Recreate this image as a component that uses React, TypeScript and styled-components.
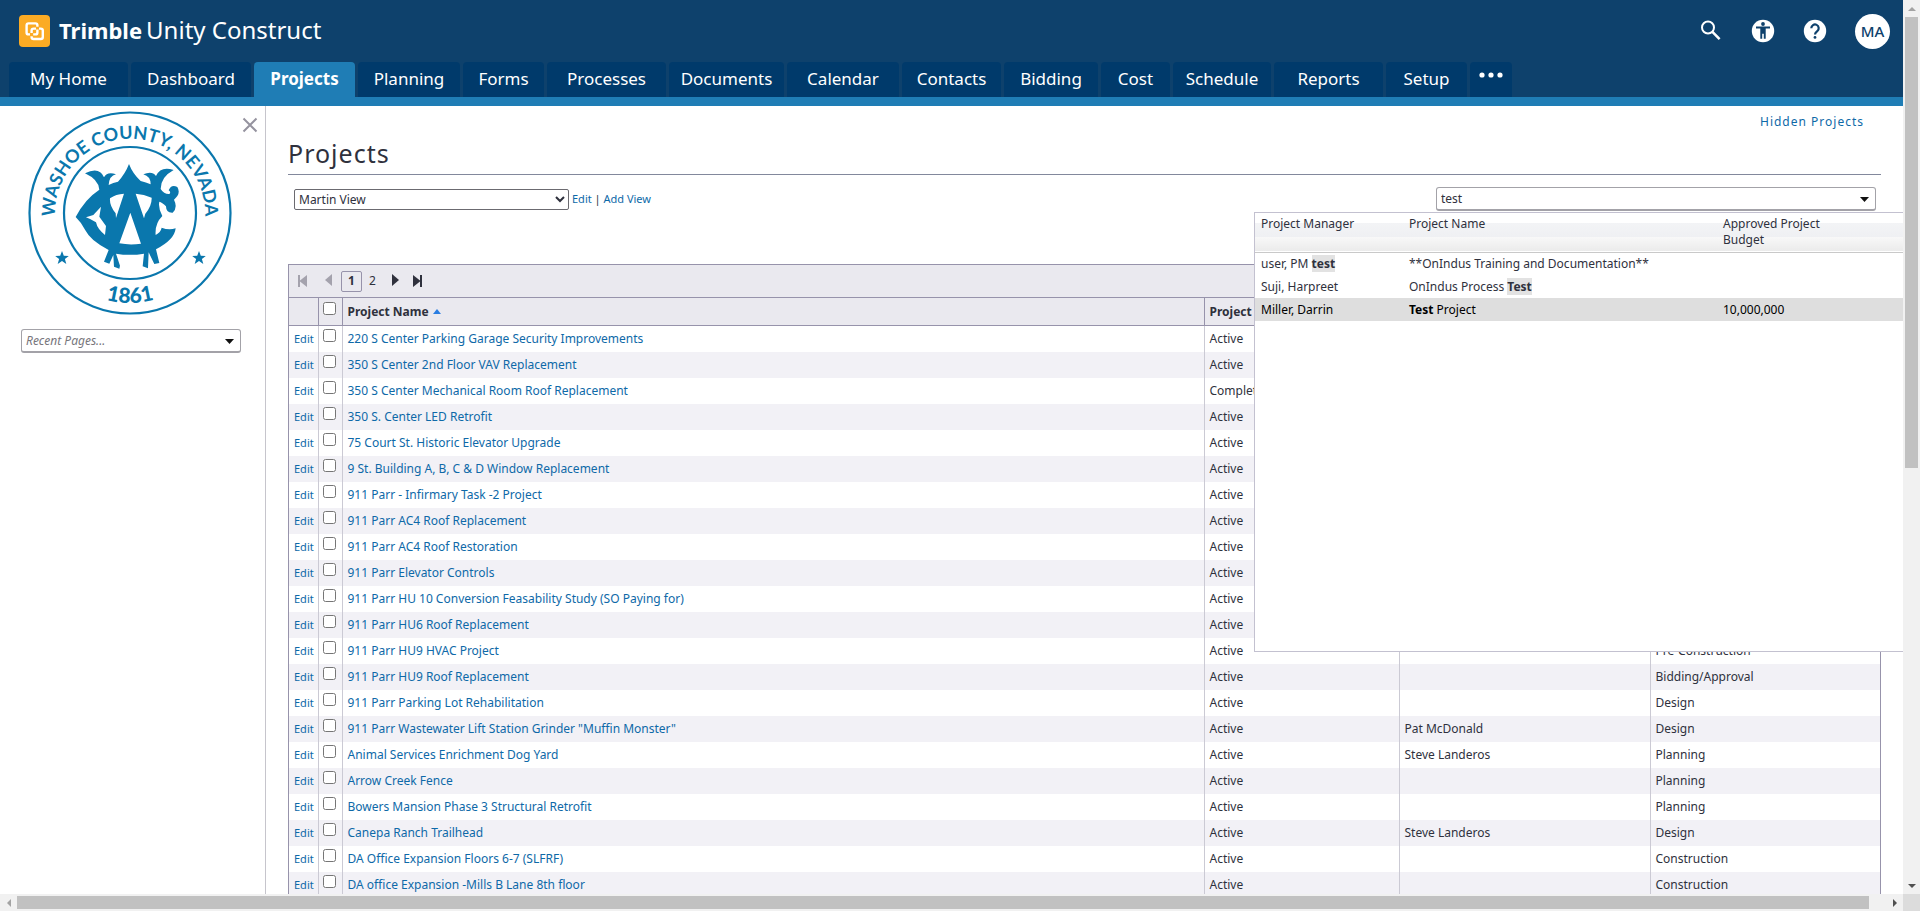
import React from "react";
import styled, { createGlobalStyle } from "styled-components";

const color = {
  header: "#0e416c",
  tab: "#003a6b",
  accent: "#1f7db5",
  link: "#0e69a8",
  ink: "#2f313d",
  gridLine: "#9793ab",
  cellLine: "#cbcad4",
  gridHead: "#eae9ef",
  stripe: "#f2f1f6",
};

const GlobalStyle = createGlobalStyle`
  *, *::before, *::after { box-sizing: border-box; }
  body {
    margin: 0;
    background: #fff;
    color: ${color.ink};
    font: 12px/16px "Noto Sans", "Open Sans", sans-serif;
  }
  a { color: ${color.link}; text-decoration: none; }
  button, input, select { font: inherit; color: inherit; }
  button { background: none; border: 0; padding: 0; cursor: pointer; }
  svg { display: block; }
`;

const Frame = styled.div`
  display: grid;
  grid-template: minmax(0, 1fr) 17px / minmax(0, 1fr) 17px;
  height: 100vh;
`;

const Page = styled.div`
  display: flex;
  flex-direction: column;
  overflow: hidden;
`;

/* Header */

const Header = styled.header`
  flex: none;
  background: ${color.header};
  border-bottom: 9px solid ${color.accent};
`;

const Brand = styled.div`
  display: flex;
  align-items: center;
  height: 62px;
  padding: 0 13px 0 19px;
  color: #fff;
`;

const BrandName = styled.div`
  display: flex;
  align-items: baseline;
  gap: 4px;
  margin-left: 9px;
  padding-bottom: 2px;
  font-size: 24px;
  line-height: 32px;
`;

const BrandBold = styled.strong`
  font-size: 22px;
`;

const Tools = styled.div`
  display: flex;
  align-items: center;
  gap: 28px;
  margin-left: auto;
`;

const ToolButton = styled.button`
  width: 24px;
  height: 24px;
  color: #fff;
`;

const Avatar = styled.button`
  width: 35px;
  height: 35px;
  border-radius: 50%;
  background: #fff;
  color: ${color.header};
  font-size: 15px;
  font-weight: 500;
`;

const Tabs = styled.nav`
  display: flex;
  gap: 3px;
  height: 35px;
  padding-left: 9px;
`;

const Tab = styled.a<{ $width: number; $active?: boolean }>`
  display: flex;
  justify-content: center;
  align-items: center;
  width: ${(p) => p.$width}px;
  padding-bottom: 1px;
  border-radius: 4px 4px 0 0;
  background: ${(p) => (p.$active ? color.accent : color.tab)};
  color: #fff;
  font-size: 17px;
  font-weight: ${(p) => (p.$active ? 700 : 400)};
`;

const MoreTab = styled.button`
  width: 42px;
  height: 35px;
  padding-bottom: 10px;
  border-radius: 4px 4px 0 0;
  background: ${color.tab};
  color: #fff;
  svg { margin: 0 auto; }
`;

/* Body */

const Body = styled.div`
  display: flex;
  flex: 1;
  min-height: 0;
`;

const Sidebar = styled.aside`
  position: relative;
  flex: none;
  width: 266px;
  padding: 5px 24px 0 21px;
  border-right: 1px solid #c6c5cc;
`;

const SealBox = styled.div`
  display: flex;
  margin: 0 0 14px 7px;
`;

const CloseButton = styled.button`
  position: absolute;
  top: 11px;
  right: 7px;
`;

const Combo = styled.div<{ $italic?: boolean }>`
  display: flex;
  align-items: center;
  height: 24px;
  padding-top: 1px;
  border: 1px solid #a3a2a8;
  border-bottom-width: 2px;
  border-radius: 3px;
  background: #fff;
  input {
    flex: 1;
    min-width: 0;
    padding: 0 4px;
    border: 0;
    outline: 0;
    background: none;
    font-style: ${(p) => (p.$italic ? "italic" : "normal")};
  }
  input::placeholder { color: #77767c; opacity: 1; }
  button { padding: 0 6px; color: #111; }
`;

const Main = styled.main`
  position: relative;
  flex: 1;
  min-width: 0;
  padding: 8px 22px 0;
`;

const TopLinks = styled.div`
  display: flex;
  justify-content: flex-end;
  padding-right: 17px;
  letter-spacing: 1px;
`;

const Title = styled.h1`
  margin: 5px 0 0;
  border-bottom: 1px solid #82889c;
  font-size: 25px;
  font-weight: 400;
  line-height: 36px;
  height: 40px;
  letter-spacing: 1px;
`;

const Toolbar = styled.div`
  display: flex;
  justify-content: space-between;
  padding: 12px 5px 0 6px;
  height: 89px;
`;

const ViewPicker = styled.div`
  display: flex;
  align-items: center;
  gap: 3px;
  height: 24px;
  font-size: 11px;
  select {
    width: 275px;
    height: 21px;
    padding: 0;
    border: 1px solid #6b6a70;
    border-radius: 2px;
    background: #fff;
    font-size: 12px;
  }
`;

const SearchBox = styled.div`
  width: 440px;
`;

/* Project grid */

const GridBox = styled.section`
  border: 1px solid ${color.gridLine};
  border-width: 1px 1px 0;
`;

const Pager = styled.div`
  display: flex;
  align-items: center;
  height: 32px;
  padding-left: 8px;
  background: ${color.gridHead};
`;

const PageStep = styled.button<{ $width: number; $dim?: boolean }>`
  width: ${(p) => p.$width}px;
  color: ${(p) => (p.$dim ? "#a4a2ad" : color.ink)};
`;

const PageNumber = styled.button<{ $current?: boolean }>`
  width: 21px;
  height: 21px;
  border: 1px solid ${(p) => (p.$current ? color.gridLine : "transparent")};
  border-radius: 2px;
  font-weight: ${(p) => (p.$current ? 700 : 400)};
  line-height: 18px;
`;

const NumberGroup = styled.div`
  display: flex;
  margin-right: 7px;
`;

const Table = styled.table`
  width: 100%;
  table-layout: fixed;
  border-collapse: collapse;
  th, td {
    height: 26px;
    padding: 0 0 0 5px;
    border-left: 1px solid ${color.cellLine};
    text-align: left;
    white-space: nowrap;
    overflow: hidden;
  }
  th {
    height: 28px;
    background: ${color.gridHead};
    border: 1px solid ${color.gridLine};
    border-width: 1px 0 1px 1px;
  }
  th:first-child, td:first-child { border-left: 0; font-size: 11px; }
  th:nth-child(2), td:nth-child(2) { padding-left: 4px; }
  tbody tr:nth-child(even) { background: ${color.stripe}; }
  input { display: block; width: 13px; height: 13px; margin: 0 0 6px; }
`;

const SortLabel = styled.span`
  display: flex;
  align-items: center;
  gap: 4px;
`;

/* Search results */

const Results = styled.div`
  position: absolute;
  top: 106px;
  right: 0;
  width: 649px;
  height: 440px;
  background: #fff;
  border: 1px solid #c3c1d0;
  border-right: 0;
`;

const ResultsTable = styled.table`
  width: 100%;
  table-layout: fixed;
  border-collapse: collapse;
  thead {
    height: 39px;
    background: linear-gradient(#fff 0 25%, #f3f4f6 26%, #eff0f3 62%, #f8f8f8 63%, #ebebeb);
    border-bottom: 1px solid #c9c9c9;
  }
  th {
    padding: 3px 6px;
    font-weight: 400;
    text-align: left;
    vertical-align: top;
  }
  th:last-child { padding-right: 60px; }
  td { height: 23px; padding: 0 6px; }
`;

const ResultRow = styled.tr<{ $selected?: boolean }>`
  background: ${(p) => (p.$selected ? "#dedede" : "transparent")};
  color: ${(p) => (p.$selected ? "#000" : "inherit")};
  mark {
    background: ${(p) => (p.$selected ? "transparent" : "#e2e2e2")};
    color: inherit;
    font-weight: 700;
  }
`;

/* Scroll bars */

const Track = styled.div<{ $vertical?: boolean }>`
  display: flex;
  flex-direction: ${(p) => (p.$vertical ? "column" : "row")};
  align-items: center;
  background: #f1f1f1;
`;

const Arrow = styled.div<{ $dim?: boolean }>`
  display: flex;
  justify-content: center;
  align-items: center;
  flex: none;
  width: 17px;
  height: 17px;
  color: ${(p) => (p.$dim ? "#a3a3a3" : "#505050")};
`;

const VerticalThumb = styled.div`
  width: 13px;
  height: 50.5%;
  background: #c1c1c1;
`;

const HorizontalThumb = styled.div`
  width: 97.3%;
  height: 13px;
  background: #c1c1c1;
`;

const Spacer = styled.div`
  flex: 1;
`;

const Corner = styled.div`
  background: #dcdcdc;
`;

const Caret = () => (
  <svg width="9" height="5" viewBox="0 0 9 5" fill="currentColor">
    <path d="M0 0h9L4.500 5z" />
  </svg>
);

const TrimbleMark = () => (
  <svg width="31" height="32" viewBox="0 0 31 32" fill="none">
    <rect width="31" height="32" rx="4" fill="#fbab24" />
    <g stroke="#fff" strokeWidth="2.4">
      <path d="M11 19.400h-1.400a2 2 0 0 1-2-2v-7a2 2 0 0 1 2-2h6.800a2 2 0 0 1 2 2v1.400" />
      <path d="M18.400 14.500v2.900a2 2 0 0 1-2 2H14.200" />
      <path d="M20 13.600h1.800a2 2 0 0 1 2 2v6.400a2 2 0 0 1-2 2h-7.200a2 2 0 0 1-2-2v-.800" />
      <path d="M12.600 18v-2.400a2 2 0 0 1 2-2H17" />
    </g>
  </svg>
);

const SearchIcon = () => (
  <svg width="24" height="24" viewBox="0 0 24 24" fill="none" stroke="#fff">
    <circle cx="9" cy="8.500" r="6" strokeWidth="2" />
    <path d="M13.200 12.700l7.400 7.400" strokeWidth="2.600" />
  </svg>
);

const AccessIcon = () => (
  <svg width="24" height="24" viewBox="0 0 24 24">
    <circle cx="12" cy="12" r="11.200" fill="#fff" />
    <g fill={color.header}>
      <circle cx="12" cy="5" r="1.900" />
      <path d="M5 7.600h14v2h-4.300v10.200h-1.900v-5h-1.600v5H9.300V9.600H5z" />
    </g>
  </svg>
);

const HelpIcon = () => (
  <svg width="24" height="24" viewBox="0 0 24 24">
    <circle cx="12" cy="12" r="11.200" fill="#fff" />
    <path d="M8.300 9.200a3.700 3.700 0 1 1 6 2.900c-1.300 1-2.300 1.600-2.300 3.400" fill="none" stroke={color.header} strokeWidth="2.200" />
    <circle cx="12" cy="18.400" r="1.400" fill={color.header} />
  </svg>
);

const Star = ({ x, y }: { x: number; y: number }) => (
  <path
    transform={`translate(${x} ${y})`}
    d="M0-7l1.800 4.700 5 .2-3.900 3.100 1.400 4.900L0 3.100l-4.300 2.800 1.400-4.900-3.900-3.100 5-.2z"
  />
);

const CountySeal = () => (
  <svg width="204" height="204" viewBox="0 0 204 204" fill="#0a77ad" role="img" aria-label="Washoe County, Nevada, 1861">
    <defs>
      <path id="seal-top" d="M28 115a75 75 0 1 1 148 0" />
      <path id="seal-bottom" d="M12 102a90 90 0 0 0 180 0" />
    </defs>
    <circle cx="102" cy="102" r="100.500" fill="none" stroke="#0a77ad" strokeWidth="2.200" />
    <circle cx="102" cy="102" r="66" fill="none" stroke="#0a77ad" strokeWidth="2.200" />
    <g fontFamily="Lato, sans-serif" textAnchor="middle">
      <text fontSize="18" fontWeight="700">
        <textPath href="#seal-top" startOffset="50%">WASHOE COUNTY, NEVADA</textPath>
      </text>
      <text fontSize="21" fontWeight="900">
        <textPath href="#seal-bottom" startOffset="50%">1861</textPath>
      </text>
    </g>
    <Star x={34} y={147} />
    <Star x={171} y={147} />
    <g transform="translate(32 34) scale(.3333)">
      <path
        fillRule="evenodd"
        d="M47 216Q75 162 118 134Q116 104 75 85Q118 64 132 97Q142 78 168 88Q148 92 146 120Q160 112 174 110Q196 86 207 57Q218 86 242 108Q258 112 272 118Q272 94 250 88Q276 76 288 93Q302 62 341 75Q302 96 302 132Q312 148 328 147Q334 142 326 136Q334 116 352 126Q364 146 342 164Q354 188 338 203Q318 204 318 184Q306 172 298 170Q294 190 307 213Q284 236 287 270Q302 262 305 248Q326 256 347 250Q344 284 288 313L298 354L283 357L266 322L264 370L248 364L252 326Q210 333 168 326L180 362L178 371L162 365L160 330L148 356L132 350L146 315Q92 288 76 256Q64 232 47 216ZM78 217L100 210L123 185L118 215L138 243L135 270Q112 252 108 232Q92 222 78 217ZM150 160Q168 147 192 146L168 219L167 205Q148 182 150 160ZM211 203L178 295Q210 301 243 296ZM227 146Q252 148 275 158Q276 182 256 206L252 220Z"
      />
    </g>
  </svg>
);

const tabs: [string, number][] = [
  ["My Home", 119], ["Dashboard", 120], ["Projects", 101], ["Planning", 102], ["Forms", 81],
  ["Processes", 119], ["Documents", 115], ["Calendar", 112], ["Contacts", 99], ["Bidding", 94],
  ["Cost", 69], ["Schedule", 98], ["Reports", 109], ["Setup", 81],
];

type Project = { name: string; status?: string; manager?: string; phase?: string };

const projects: Project[] = [
  { name: "220 S Center Parking Garage Security Improvements" },
  { name: "350 S Center 2nd Floor VAV Replacement" },
  { name: "350 S Center Mechanical Room Roof Replacement", status: "Complete" },
  { name: "350 S. Center LED Retrofit" },
  { name: "75 Court St. Historic Elevator Upgrade" },
  { name: "9 St. Building A, B, C & D Window Replacement" },
  { name: "911 Parr - Infirmary Task -2 Project" },
  { name: "911 Parr AC4 Roof Replacement" },
  { name: "911 Parr AC4 Roof Restoration" },
  { name: "911 Parr Elevator Controls" },
  { name: "911 Parr HU 10 Conversion Feasability Study (SO Paying for)" },
  { name: "911 Parr HU6 Roof Replacement" },
  { name: "911 Parr HU9 HVAC Project", phase: "Pre-Construction" },
  { name: "911 Parr HU9 Roof Replacement", phase: "Bidding/Approval" },
  { name: "911 Parr Parking Lot Rehabilitation", phase: "Design" },
  { name: '911 Parr Wastewater Lift Station Grinder "Muffin Monster"', manager: "Pat McDonald", phase: "Design" },
  { name: "Animal Services Enrichment Dog Yard", manager: "Steve Landeros", phase: "Planning" },
  { name: "Arrow Creek Fence", phase: "Planning" },
  { name: "Bowers Mansion Phase 3 Structural Retrofit", phase: "Planning" },
  { name: "Canepa Ranch Trailhead", manager: "Steve Landeros", phase: "Design" },
  { name: "DA Office Expansion Floors 6-7 (SLFRF)", phase: "Construction" },
  { name: "DA office Expansion -Mills B Lane 8th floor", phase: "Construction" },
];

const AppHeader = () => (
  <Header>
    <Brand>
      <TrimbleMark />
      <BrandName>
        <BrandBold>Trimble</BrandBold>
        <span>Unity Construct</span>
      </BrandName>
      <Tools>
        <ToolButton aria-label="Search"><SearchIcon /></ToolButton>
        <ToolButton aria-label="Accessibility"><AccessIcon /></ToolButton>
        <ToolButton aria-label="Help"><HelpIcon /></ToolButton>
        <Avatar>MA</Avatar>
      </Tools>
    </Brand>
    <Tabs>
      {tabs.map(([label, width]) => (
        <Tab key={label} href="#" $width={width} $active={label === "Projects"}>{label}</Tab>
      ))}
      <MoreTab aria-label="More tabs">
        <svg width="24" height="6" viewBox="0 0 24 6" fill="currentColor">
          <circle cx="3" cy="3" r="2.600" /><circle cx="12" cy="3" r="2.600" /><circle cx="21" cy="3" r="2.600" />
        </svg>
      </MoreTab>
    </Tabs>
  </Header>
);

const ProjectGrid = () => (
  <GridBox>
    <Pager>
      <PageStep $width={26} $dim aria-label="First page">
        <svg width="12" height="12" viewBox="0 0 12 12" fill="currentColor"><path d="M1 0h2v5.500L10 0v12L3 6.500V12H1z" /></svg>
      </PageStep>
      <PageStep $width={18} $dim aria-label="Previous page">
        <svg width="12" height="14" viewBox="0 0 12 14" fill="currentColor"><path d="M9 0v12L2 6z" /></svg>
      </PageStep>
      <NumberGroup>
        <PageNumber $current>1</PageNumber>
        <PageNumber>2</PageNumber>
      </NumberGroup>
      <PageStep $width={22} aria-label="Next page">
        <svg width="12" height="14" viewBox="0 0 12 14" fill="currentColor"><path d="M2 0v12l7-6z" /></svg>
      </PageStep>
      <PageStep $width={22} aria-label="Last page">
        <svg width="12" height="12" viewBox="0 0 12 12" fill="currentColor"><path d="M1 0v12l7-5.500V12h2V0H8v5.500z" /></svg>
      </PageStep>
    </Pager>
    <Table>
      <colgroup>
        <col width="29" /><col width="24" /><col /><col width="195" /><col width="251" /><col width="230" />
      </colgroup>
      <thead>
        <tr>
          <th />
          <th><input type="checkbox" aria-label="Select all projects" /></th>
          <th>
            <SortLabel>
              Project Name
              <svg width="8" height="5" viewBox="0 0 8 5" fill="#2a7de1"><path d="M0 5l4-5 4 5z" /></svg>
            </SortLabel>
          </th>
          <th>Project Status</th>
          <th>Project Manager</th>
          <th>Phase</th>
        </tr>
      </thead>
      <tbody>
        {projects.map((p) => (
          <tr key={p.name}>
            <td><a href="#">Edit</a></td>
            <td><input type="checkbox" aria-label={`Select ${p.name}`} /></td>
            <td><a href="#">{p.name}</a></td>
            <td>{p.status ?? "Active"}</td>
            <td>{p.manager}</td>
            <td>{p.phase}</td>
          </tr>
        ))}
      </tbody>
    </Table>
  </GridBox>
);

const SearchResults = () => (
  <Results>
    <ResultsTable>
      <colgroup>
        <col width="148" /><col width="314" /><col />
      </colgroup>
      <thead>
        <tr>
          <th>Project Manager</th>
          <th>Project Name</th>
          <th>Approved Project Budget</th>
        </tr>
      </thead>
      <tbody>
        <ResultRow>
          <td>user, PM <mark>test</mark></td>
          <td>**OnIndus Training and Documentation**</td>
          <td />
        </ResultRow>
        <ResultRow>
          <td>Suji, Harpreet</td>
          <td>OnIndus Process <mark>Test</mark></td>
          <td />
        </ResultRow>
        <ResultRow $selected>
          <td>Miller, Darrin</td>
          <td><mark>Test</mark> Project</td>
          <td>10,000,000</td>
        </ResultRow>
      </tbody>
    </ResultsTable>
  </Results>
);

export default function App() {
  return (
    <>
      <GlobalStyle />
      <Frame>
        <Page>
          <AppHeader />
          <Body>
            <Sidebar>
              <SealBox><CountySeal /></SealBox>
              <CloseButton aria-label="Close sidebar">
                <svg width="16" height="16" viewBox="0 0 16 16" stroke="#95939f" strokeWidth="2"><path d="M1.500 1.500l13 13m0-13l-13 13" /></svg>
              </CloseButton>
              <Combo $italic>
                <input aria-label="Recent pages" placeholder="Recent Pages..." />
                <button aria-label="Show recent pages"><Caret /></button>
              </Combo>
            </Sidebar>
            <Main>
              <TopLinks><a href="#">Hidden Projects</a></TopLinks>
              <Title>Projects</Title>
              <Toolbar>
                <ViewPicker>
                  <select aria-label="View"><option>Martin View</option></select>
                  <span><a href="#">Edit</a> | <a href="#">Add View</a></span>
                </ViewPicker>
                <SearchBox>
                  <Combo>
                    <input aria-label="Search projects" defaultValue="test" />
                    <button aria-label="Show matches"><Caret /></button>
                  </Combo>
                </SearchBox>
              </Toolbar>
              <ProjectGrid />
              <SearchResults />
            </Main>
          </Body>
        </Page>
        <Track $vertical>
          <Arrow $dim><svg width="8" height="4" viewBox="0 0 8 4" fill="currentColor"><path d="M0 4l4-4 4 4z" /></svg></Arrow>
          <VerticalThumb />
          <Spacer />
          <Arrow><svg width="8" height="4" viewBox="0 0 8 4" fill="currentColor"><path d="M0 0h8L4 4z" /></svg></Arrow>
        </Track>
        <Track>
          <Arrow $dim><svg width="4" height="8" viewBox="0 0 4 8" fill="currentColor"><path d="M4 0v8L0 4z" /></svg></Arrow>
          <HorizontalThumb />
          <Spacer />
          <Arrow><svg width="4" height="8" viewBox="0 0 4 8" fill="currentColor"><path d="M0 0v8l4-4z" /></svg></Arrow>
        </Track>
        <Corner />
      </Frame>
    </>
  );
}
